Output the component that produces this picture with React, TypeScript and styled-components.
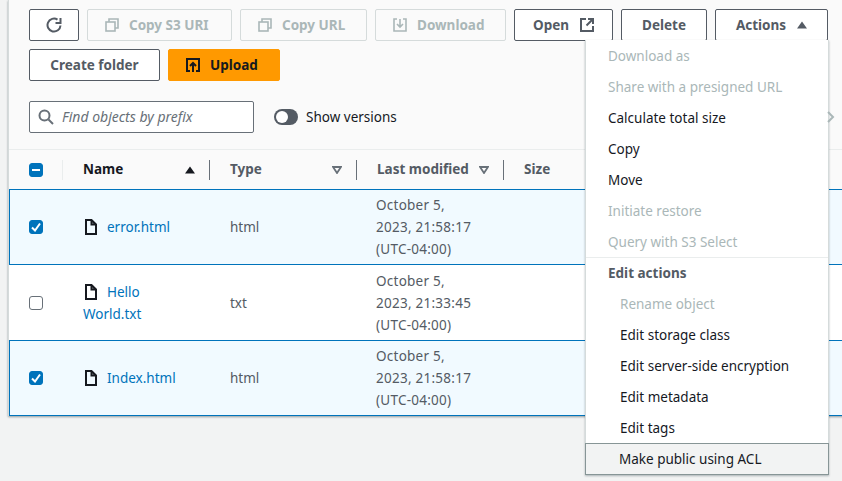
import React from "react";
import styled, { createGlobalStyle } from "styled-components";

const GlobalStyle = createGlobalStyle`
  html, body {
    margin: 0;
    padding: 0;
    background: #f2f3f3;
  }
  body {
    font-family: "Noto Sans", "Open Sans", sans-serif;
    font-size: 13.5px;
    line-height: 22px;
    color: #16191f;
  }
`;

const Page = styled.div`
  position: relative;
  width: 842px;
  height: 481px;
  overflow: hidden;
`;

const Panel = styled.div`
  margin-left: 8px;
  width: 860px;
  background: #fafafa;
  border-left: 1px solid #d5dbdb;
  box-shadow: 0 1px 2px rgba(0, 28, 36, 0.4);
`;

const Controls = styled.div`
  display: flex;
  flex-direction: column;
  padding: 9px 0 16px 20px;
`;

const ButtonRow = styled.div`
  display: flex;
  gap: 8px;
  margin-bottom: 8px;
`;

const Button = styled.div<{ $w: number; $disabled?: boolean; $primary?: boolean; $iconLeft?: boolean }>`
  box-sizing: border-box;
  width: ${(p) => p.$w}px;
  height: 32px;
  display: flex;
  align-items: center;
  justify-content: ${(p) => (p.$iconLeft ? "flex-start" : "center")};
  gap: ${(p) => (p.$iconLeft ? 10 : 11)}px;
  padding-left: ${(p) => (p.$iconLeft ? 17 : 0)}px;
  border-radius: 2px;
  font-weight: 700;
  background: ${(p) => (p.$primary ? "#ff9900" : p.$disabled ? "transparent" : "#fff")};
  border: 1px solid
    ${(p) => (p.$primary ? "#ff9900" : p.$disabled ? "#d5dbdb" : "#545b64")};
  color: ${(p) => (p.$primary ? "#16191f" : p.$disabled ? "#aab7b8" : "#545b64")};
`;

const SearchRow = styled.div`
  display: flex;
  align-items: center;
  gap: 20px;
  margin-top: 12px;
`;

const SearchBox = styled.div`
  box-sizing: border-box;
  width: 225px;
  height: 32px;
  display: flex;
  align-items: center;
  gap: 8px;
  padding-left: 8px;
  background: #fff;
  border: 1px solid #687078;
  border-radius: 2px;
  font-size: 14px;
  font-style: italic;
  color: #687078;
`;

const Toggle = styled.div`
  display: flex;
  align-items: center;
  gap: 8px;
  color: #16191f;
`;

const ToggleTrack = styled.span`
  box-sizing: border-box;
  width: 24px;
  height: 16px;
  padding: 2px;
  border-radius: 8px;
  background: #545b64;
`;

const ToggleKnob = styled.span`
  display: block;
  width: 12px;
  height: 12px;
  border-radius: 50%;
  background: #fff;
`;

const HeaderRow = styled.div`
  display: grid;
  grid-template-columns: 54px 147px 147px 147px 1fr;
  height: 39px;
  align-items: center;
  border-top: 1px solid #eaeded;
  font-weight: 700;
  color: #545b64;
`;

const HeaderCell = styled.div<{ $divider?: boolean; $dark?: boolean }>`
  box-sizing: border-box;
  height: 20px;
  display: flex;
  align-items: center;
  justify-content: space-between;
  padding: 0 14px 0 20px;
  border-right: 1px solid ${(p) => (p.$divider ? "#687078" : "transparent")};
  color: ${(p) => (p.$dark ? "#16191f" : "#545b64")};
`;

const HeaderLabel = styled.span`
  position: relative;
  top: -1px;
`;

const CheckHeader = styled.div`
  box-sizing: border-box;
  height: 20px;
  padding-left: 20px;
  display: flex;
  align-items: center;
  border-right: 1px solid #eaeded;
`;

const Row = styled.div<{ $selected?: boolean }>`
  box-sizing: border-box;
  display: grid;
  grid-template-columns: 53px 147px 146px 147px 1fr;
  align-items: center;
  height: ${(p) => (p.$selected ? 76 : 75)}px;
  background: ${(p) => (p.$selected ? "#f1faff" : "#fff")};
  border-top: ${(p) => (p.$selected ? "1px solid #0073bb" : "none")};
  border-bottom: ${(p) => (p.$selected ? "1px solid #0073bb" : "none")};
  border-left: ${(p) => (p.$selected ? "1px solid #0073bb" : "1px solid transparent")};
  color: #545b64;
`;

const CheckCell = styled.div`
  padding-left: 19px;
  display: flex;
`;

const CheckBox = styled.span<{ $on?: boolean }>`
  box-sizing: border-box;
  width: 14px;
  height: 14px;
  display: flex;
  align-items: center;
  justify-content: center;
  border-radius: 3px;
  background: ${(p) => (p.$on ? "#0073bb" : "#fff")};
  border: 1px solid ${(p) => (p.$on ? "#0073bb" : "#687078")};
`;

const NameCell = styled.div`
  padding: 0 20px;
  color: #0073bb;
`;

const FileGlyph = styled.svg`
  display: inline-block;
  vertical-align: -3px;
  margin: 0 10px 0 2px;
`;

const Cell = styled.div`
  padding-left: 20px;
`;

const DateCell = styled(Cell)`
  letter-spacing: 0.25px;
`;

const Menu = styled.div`
  position: absolute;
  left: 585px;
  top: 40px;
  width: 244px;
  box-sizing: border-box;
  background: #fff;
  border: 1px solid #d5dbdb;
  border-top: none;
  box-shadow: 0 1px 2px rgba(0, 28, 36, 0.3);
`;

const MenuItem = styled.div<{ $disabled?: boolean; $child?: boolean; $hover?: boolean; $head?: boolean }>`
  box-sizing: border-box;
  height: 31px;
  display: flex;
  align-items: center;
  padding-left: ${(p) => (p.$child ? 34 : 22)}px;
  font-weight: ${(p) => (p.$head ? 700 : 400)};
  color: ${(p) => (p.$disabled ? "#aab7b8" : p.$head ? "#545b64" : "#16191f")};
  ${(p) =>
    p.$hover &&
    `background: #f2f3f3;
     border: 1px solid #879596;
     padding-left: 33px;
     margin: 0 -1px -1px -1px;
     height: 32px;`}
`;

const MenuDivider = styled.div`
  height: 1px;
  margin-bottom: -1px;
  background: #eaeded;
`;

const Chevron = styled.svg`
  position: absolute;
  left: 827px;
  top: 111px;
`;

const iconStroke = { fill: "none", strokeWidth: 2, stroke: "currentColor" };

const RefreshIcon = () => (
  <svg width="16" height="16" viewBox="0 0 16 16" {...iconStroke}>
    <path d="M14.5 8.5A6.5 6.5 0 1 1 11.5 2.6" />
    <path d="M14.5 1v5H9.5" />
  </svg>
);

const CopyIcon = () => (
  <svg width="14" height="14" viewBox="0 0 14 14" {...iconStroke} strokeWidth="1.6">
    <path d="M4 4V1h9v9h-3" />
    <rect x="1" y="4" width="9" height="9" />
  </svg>
);

const DownloadIcon = () => (
  <svg width="14" height="14" viewBox="0 0 14 14" {...iconStroke} strokeWidth="1.6">
    <path d="M4 1H1v12h12V1h-3" />
    <path d="M7 1v7M4 6l3 3 3-3" />
  </svg>
);

const ExternalIcon = () => (
  <svg width="14" height="14" viewBox="0 0 14 14" {...iconStroke}>
    <path d="M6 1H1v12h12V8" />
    <path d="M8 1h5v5M13 1 6.5 7.5" />
  </svg>
);

const UploadIcon = () => (
  <svg width="14" height="14" viewBox="0 0 14 14" {...iconStroke}>
    <path d="M4 13H1V1h12v12h-3" />
    <path d="M7 14V6M4 8l3-3 3 3" />
  </svg>
);

const SearchIcon = () => (
  <svg width="16" height="16" viewBox="0 0 16 16" {...iconStroke}>
    <circle cx="6.5" cy="6.5" r="5" />
    <path d="m10.5 10.5 4.5 4.5" />
  </svg>
);

const FileIcon = () => (
  <FileGlyph width="12" height="16" viewBox="0 0 12 16" fill="none" stroke="#16191f" strokeWidth="2">
    <path d="M1 1h5.5L11 5.5V15H1zM6.5 1v4.5H11" />
  </FileGlyph>
);

const Triangle = ({ up, color }: { up?: boolean; color: string }) => (
  <svg width="10" height="8" viewBox="0 0 10 8">
    <path d={up ? "M5 0.5 10 7.5H0z" : "M1 1h8L5 7z"} fill={up ? color : "none"} stroke={color} strokeWidth={up ? 0 : 1.8} />
  </svg>
);

const CheckMark = () => (
  <svg width="10" height="10" viewBox="0 0 10 10" fill="none" stroke="#fff" strokeWidth="2">
    <path d="M1 5.5 4 8.5 9 1.5" />
  </svg>
);

const Dash = () => (
  <svg width="10" height="10" viewBox="0 0 10 10" stroke="#fff" strokeWidth="2">
    <path d="M1 5h8" />
  </svg>
);

const dateLines = (time: string) => (
  <>
    October 5,
    <br />
    2023, {time}
    <br />
    (UTC-04:00)
  </>
);

const files = [
  { name: "error.html", type: "html", time: "21:58:17", selected: true },
  { name: "Hello World.txt", type: "txt", time: "21:33:45", selected: false },
  { name: "Index.html", type: "html", time: "21:58:17", selected: true },
];

const menuItems = [
  { label: "Download as", disabled: true },
  { label: "Share with a presigned URL", disabled: true },
  { label: "Calculate total size" },
  { label: "Copy" },
  { label: "Move" },
  { label: "Initiate restore", disabled: true },
  { label: "Query with S3 Select", disabled: true },
];

const editItems = [
  { label: "Rename object", disabled: true },
  { label: "Edit storage class" },
  { label: "Edit server-side encryption" },
  { label: "Edit metadata" },
  { label: "Edit tags" },
];

export default function App() {
  return (
    <Page>
      <GlobalStyle />
      <Panel>
        <Controls>
          <ButtonRow>
            <Button $w={50}>
              <RefreshIcon />
            </Button>
            <Button $w={145} $disabled $iconLeft>
              <CopyIcon />
              Copy S3 URI
            </Button>
            <Button $w={127} $disabled $iconLeft>
              <CopyIcon />
              Copy URL
            </Button>
            <Button $w={131} $disabled $iconLeft>
              <DownloadIcon />
              Download
            </Button>
            <Button $w={99}>
              Open
              <ExternalIcon />
            </Button>
            <Button $w={86}>Delete</Button>
            <Button $w={113}>
              Actions
              <Triangle up color="#545b64" />
            </Button>
          </ButtonRow>
          <ButtonRow>
            <Button $w={131}>Create folder</Button>
            <Button $w={112} $primary $iconLeft>
              <UploadIcon />
              Upload
            </Button>
          </ButtonRow>
          <SearchRow>
            <SearchBox>
              <SearchIcon />
              Find objects by prefix
            </SearchBox>
            <Toggle>
              <ToggleTrack>
                <ToggleKnob />
              </ToggleTrack>
              Show versions
            </Toggle>
          </SearchRow>
        </Controls>
        <HeaderRow>
          <CheckHeader>
            <CheckBox $on>
              <Dash />
            </CheckBox>
          </CheckHeader>
          <HeaderCell $divider $dark>
            <HeaderLabel>Name</HeaderLabel>
            <Triangle up color="#16191f" />
          </HeaderCell>
          <HeaderCell $divider>
            <HeaderLabel>Type</HeaderLabel>
            <Triangle color="#687078" />
          </HeaderCell>
          <HeaderCell $divider>
            <HeaderLabel>Last modified</HeaderLabel>
            <Triangle color="#687078" />
          </HeaderCell>
          <HeaderCell>
            <HeaderLabel>Size</HeaderLabel>
          </HeaderCell>
        </HeaderRow>
        {files.map((f) => (
          <Row key={f.name} $selected={f.selected}>
            <CheckCell>
              <CheckBox $on={f.selected}>{f.selected && <CheckMark />}</CheckBox>
            </CheckCell>
            <NameCell>
              <FileIcon />
              {f.name}
            </NameCell>
            <Cell>{f.type}</Cell>
            <DateCell>{dateLines(f.time)}</DateCell>
            <Cell />
          </Row>
        ))}
      </Panel>
      <Menu>
        {menuItems.map((m) => (
          <MenuItem key={m.label} $disabled={m.disabled}>
            {m.label}
          </MenuItem>
        ))}
        <MenuDivider />
        <MenuItem $head>Edit actions</MenuItem>
        {editItems.map((m) => (
          <MenuItem key={m.label} $child $disabled={m.disabled}>
            {m.label}
          </MenuItem>
        ))}
        <MenuItem $child $hover>
          Make public using ACL
        </MenuItem>
      </Menu>
      <Chevron width="8" height="12" viewBox="0 0 8 12" fill="none" stroke="#aab7b8" strokeWidth="2">
        <path d="M1 1l5 5-5 5" />
      </Chevron>
    </Page>
  );
}
